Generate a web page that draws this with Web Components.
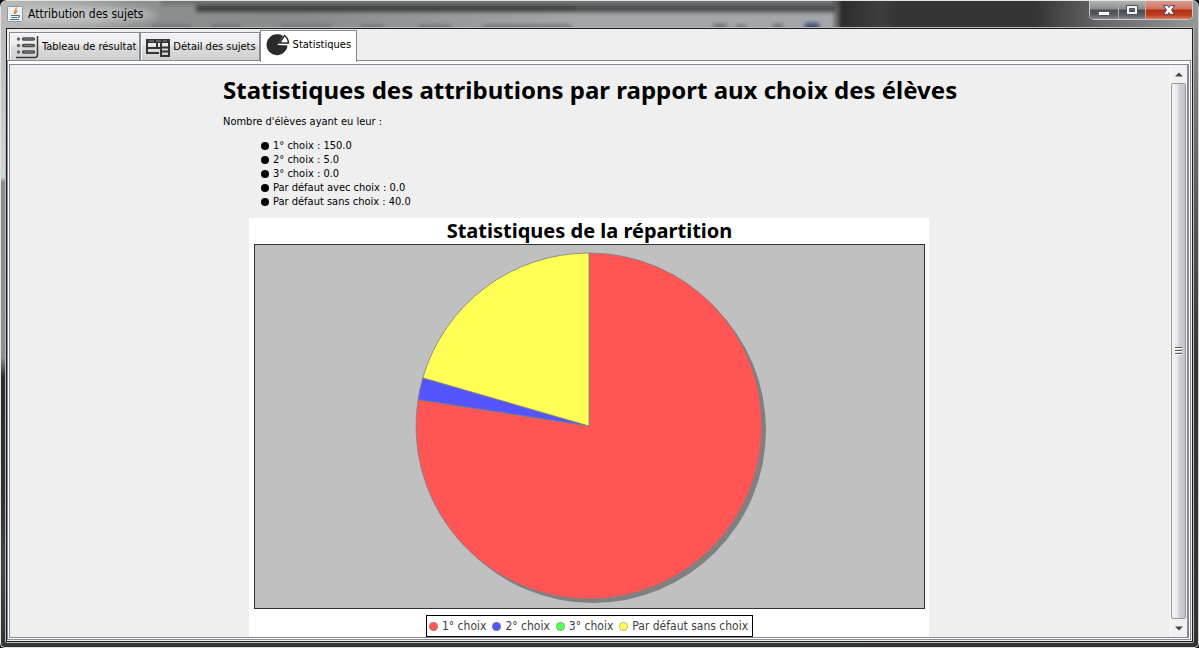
<!DOCTYPE html>
<html lang="fr">
<head>
<meta charset="utf-8">
<title>Attribution des sujets</title>
<style>
html,body{margin:0;height:100%;background:#111}
body{font:11px/14px "DejaVu Sans Condensed","DejaVu Sans",sans-serif;color:#000}
</style>
</head>
<body>
<app-window heading="Attribution des sujets">
  <tab-bar slot="tabs">
    <tab-item icon="list">Tableau de résultat</tab-item>
    <tab-item icon="table">Détail des sujets</tab-item>
    <tab-item icon="pie" selected>Statistiques</tab-item>
  </tab-bar>
  <scroll-pane>
    <stats-report></stats-report>
  </scroll-pane>
</app-window>

<script>
const define = (name, html, setup) => {
  const t = document.createElement('template');
  t.innerHTML = html;
  customElements.define(name, class extends HTMLElement {
    constructor() {
      super();
      this.attachShadow({mode: 'open'}).append(t.content.cloneNode(true));
    }
    connectedCallback() { if (setup) setup(this, this.shadowRoot); }
  });
};

define('window-controls', `
<style>
:host{display:flex;height:19px;width:104px;box-sizing:border-box;border:1px solid #c9c9c9;border-top:0;border-radius:0 0 5px 5px;overflow:hidden;background:#222}
button{margin:0;padding:0;border:0;height:18px;display:flex;align-items:center;justify-content:center;background:linear-gradient(#b4b4b4,#8b8b8b 45%,#4b4c50 50%,#5d6066 80%,#868a90)}
.min{width:28px}.max{width:27px;border-left:1px solid #aaa}
.close{flex:1;border-left:1px solid #c9a59c;background:linear-gradient(#dc9c8e,#c9705e 45%,#b02d12 50%,#c13f22 80%,#dd7d5c)}
svg{display:block}
</style>
<button class="min" aria-label="Réduire"><svg width="14" height="14"><rect x="1.500" y="8.500" width="11" height="4" rx="1" fill="#fff" stroke="#4c5060"/></svg></button>
<button class="max" aria-label="Agrandir"><svg width="14" height="14"><path fill="#f2f2f2" fill-rule="evenodd" stroke="#4c5060" d="M1.500 2.500h11v9h-11zM4.500 5.500v3h5v-3z"/></svg></button>
<button class="close" aria-label="Fermer"><svg width="14" height="14"><path fill="#fff" stroke="#4c4656" d="M1.500 2.500h4l1.500 2 1.500-2h4l-3 4.500 3 4.500h-4l-1.500-2-1.500 2h-4l3-4.500z"/></svg></button>
`);

define('app-window', `
<style>
:host{position:relative;display:flex;flex-direction:column;box-sizing:border-box;height:100vh;border:1px solid #dfe5e3;border-right-color:#d0d0d0;border-radius:7px 7px 5px 5px;overflow:hidden;padding:0 4px 4px;
background:
 linear-gradient(90deg,transparent 70%,#333 73%) 0 100%/100% 5px no-repeat,
 linear-gradient(#3a3c3c,#303232) 0 100%/100% 5px no-repeat,
 linear-gradient(#909090,#777 80px,#555 200px,#343434 340px,#333) 100% 26px/5px 100% no-repeat,
 linear-gradient(#b9b9b9,#d3d6d6 150px,#8a8c8c 155px,#8f9191 330px,#2c2e2e 350px,#333 480px,#454747 540px,#2c2e2e) 0 26px/5px 100% no-repeat,
 #777}
.glass{position:absolute;inset:0 0 auto 0;height:27px;overflow:hidden}
.glass svg{display:block;width:100%;height:27px}
header{position:relative;display:flex;align-items:flex-start;justify-content:space-between;height:26px;padding:0 1px 0 2px}
.name{display:flex;align-items:center;gap:5px;height:26px;margin:0;font-weight:400;font-size:12px;line-height:16px}
.client{position:relative;flex:1;min-height:0;display:flex;flex-direction:column;border:1px solid #b9bcbc;border-radius:2px}
.inner{flex:1;min-height:0;display:flex;flex-direction:column;border:1px solid #1d1b20;background:#efefef;padding-top:1px}
.pane{flex:1;min-height:0;display:flex;border:1px solid #868a97;background:#fff;padding:3px 1px 1px;margin:0 1px 1px 0}
</style>
<div class="glass"><svg preserveAspectRatio="none" viewBox="0 0 1197 27">
<defs><linearGradient id="g"><stop offset="0" stop-color="#b9bbbb"/><stop offset=".08" stop-color="#a5a6a6"/><stop offset=".15" stop-color="#8d8f8f"/><stop offset=".35" stop-color="#898b8c"/><stop offset=".69" stop-color="#a4a7a9"/></linearGradient>
<linearGradient id="r"><stop offset="0" stop-color="#333" stop-opacity="0"/><stop offset=".03" stop-color="#2d2d2d"/><stop offset=".14" stop-color="#3e3e3e"/><stop offset=".18" stop-color="#343434"/><stop offset=".55" stop-color="#343434"/><stop offset=".75" stop-color="#6a6a6a"/><stop offset="1" stop-color="#969696"/></linearGradient>
<filter id="b" x="-20%" y="-100%" width="140%" height="300%"><feGaussianBlur stdDeviation="5"/></filter><filter id="c" x="-20%" y="-100%" width="140%" height="300%"><feGaussianBlur stdDeviation="2"/></filter></defs>
<rect width="850" height="27" fill="url(#g)"/>
<g filter="url(#c)"><rect x="160" y="-4" width="680" height="8" fill="#707472"/><rect x="195" y="4" width="640" height="7" fill="#484848"/><rect x="195" y="4" width="380" height="6" fill="#3c3c3c"/>
<g fill="#6c7078"><rect x="150" y="24" width="40" height="5"/><rect x="210" y="24" width="30" height="5"/><rect x="280" y="24" width="50" height="5"/><rect x="360" y="24" width="22" height="5"/><rect x="418" y="24" width="32" height="5"/><rect x="482" y="24" width="88" height="5"/><rect x="712" y="23" width="14" height="6"/><rect x="735" y="24" width="10" height="5"/><rect x="772" y="23" width="10" height="6"/></g><rect x="804" y="22" width="14" height="8" fill="#3c4878"/></g>
<rect x="830" width="367" height="27" fill="url(#r)"/>
<ellipse cx="84" cy="14" rx="72" ry="8" fill="#fff" opacity=".4" filter="url(#b)"/>
</svg></div>
<header>
<h1 class="name"><svg width="16" height="16"><rect x=".5" y=".5" width="15" height="15" rx="1" fill="#eef2f5" stroke="#8b99a6"/><path d="M9 1.500C10 4 6 5 7.500 8M10.500 4.500C8 6 9 6.500 8.500 8" fill="none" stroke="#e8802e" stroke-width="1.300"/><path d="M4 9.500h6.500M4.500 11.500h5.500M10.500 9.500c3-.5 2 2 0 2M3 13.500h9" fill="none" stroke="#41719c" stroke-width="1.100"/></svg><span></span></h1>
<window-controls></window-controls>
</header>
<div class="client"><div class="inner"><slot name="tabs"></slot><div class="pane"><slot></slot></div></div></div>
`, (el, root) => { root.querySelector('.name span').textContent = el.getAttribute('heading'); });

define('tab-bar', `
<style>:host{display:flex;align-items:flex-end;height:30px;padding-left:2px;position:relative;z-index:1}</style><slot></slot>`,
  el => el.setAttribute('role', 'tablist'));

const ICONS = {
  list: `<svg width="24" height="24"><path d="M1 22.500h19q2.500 0 2.500-3V1" fill="none" stroke="#3a3a3a" stroke-width="1.500"/><path d="M8.500 4h10M8.500 10.500h10M8.500 17h10" stroke="#4c4c4c" stroke-width="3.400" stroke-linecap="round"/><path d="M8.500 4h10M8.500 10.500h10M8.500 17h10" stroke="#808080" stroke-width="1"/><g fill="#666"><circle cx="3.500" cy="4" r="1.700"/><circle cx="3.500" cy="10.500" r="1.700"/><circle cx="3.500" cy="17" r="1.700"/></g></svg>`,
  table: `<svg width="24" height="24"><path d="M0 4h24v4H0z" fill="#333"/><path d="M3 6h5M10 6h5M17 6h4" stroke="#8a8a8a"/><path d="M1 4v14h12M11 8v5M1 13h13M15 8v13h8V8M15 12.500h8M15 16.500h8" fill="none" stroke="#333" stroke-width="2"/></svg>`,
  pie: `<svg width="24" height="24"><path d="M11.500 12 17 3A10.500 10.500 0 1 0 21.500 12.500z" fill="#2b2b2b"/><path d="M13.500 10 18.500 2.500Q22 5 22.500 10z" fill="#fff" stroke="#2b2b2b" stroke-width="1.500"/></svg>`
};
define('tab-item', `
<style>
:host{display:block}
button{display:flex;align-items:center;gap:3px;box-sizing:border-box;height:28px;margin:0;padding:0 3px 0 5px;border:1px solid #868a97;border-bottom:0;background:linear-gradient(#f3f3f3,#ebebeb 45%,#dcdcdc 50%,#cfcfcf);box-shadow:inset 1px 1px #fafafa;font:inherit;color:#000;white-space:nowrap}
:host([selected]) button{height:32px;margin:0 0 -2px;padding:0 5px 4px;background:#fff;box-shadow:none}
svg{display:block}
</style>
<button role="tab"><span class="icon"></span><slot></slot></button>
`, (el, root) => {
  root.querySelector('.icon').innerHTML = ICONS[el.getAttribute('icon')];
  root.querySelector('button').setAttribute('aria-selected', el.hasAttribute('selected'));
});

define('scroll-pane', `
<style>
:host{flex:1;min-width:0;display:flex;border:1px solid #868a97;border-right-width:2px;background:#efefef}
.view{flex:1;min-width:0;overflow:hidden}
.bar{display:flex;flex-direction:column;width:17px;box-sizing:border-box;background:#f1f1f1;border-left:1px solid #fafafa}
.bar button{height:18px;margin:0;padding:0;border:0;background:none;display:flex;align-items:center;justify-content:center}
.thumb{flex:1;box-sizing:border-box;margin:0 1px 0 0;border:1px solid #979797;border-radius:2px;background:linear-gradient(90deg,#f5f5f5,#e6e6e9 45%,#cfcfd4 55%,#c3c3c9);display:flex;align-items:center;justify-content:center}
</style>
<div class="view"><slot></slot></div>
<div class="bar">
<button aria-label="Haut"><svg width="8" height="5"><path d="M0 4.500 4 .5l4 4z" fill="#444"/></svg></button>
<div class="thumb"><svg width="7" height="8"><path d="M0 .5h7M0 3.500h7M0 6.500h7" stroke="#555"/><path d="M0 1.500h7M0 4.500h7M0 7.500h7" stroke="#fff"/></svg></div>
<button aria-label="Bas"><svg width="8" height="5"><path d="M0 .5 4 4.500l4-4z" fill="#444"/></svg></button>
</div>`);

define('pie-chart', `
<style>
:host{display:block;box-sizing:border-box;width:680px;max-width:100%;background:#fff;padding:0 4px 0 5px}
figure{margin:0}
h2{margin:0;font:bold 20px/26px "Noto Sans",sans-serif;text-align:center}
.plot{box-sizing:border-box;border:1px solid #333;background:silver}
.plot svg{display:block;width:100%;height:363px}
figcaption{display:flex;justify-content:center;padding:6px 0 5px}
ul{display:flex;gap:6px;margin:0;padding:0 4px 0 2px;border:1px solid #000;list-style:none;font-size:12px;line-height:20px;color:#404040}
li{display:flex;align-items:center;gap:4px}
i{width:9px;height:9px;box-sizing:border-box;border:1px solid #8888;border-radius:50%}
</style>
<figure><h2>Statistiques de la répartition</h2>
<div class="plot"><svg viewBox="0 0 669 363" role="img" aria-label="Répartition des choix"><circle cx="338" cy="185" r="173" fill="#808080"/><g class="slices" stroke="#808080" stroke-opacity=".8"></g></svg></div>
<figcaption><ul></ul></figcaption></figure>
`, (el, root) => {
  const data = [['1° choix',151,'#f55'],['2° choix',4,'#55f'],['3° choix',0,'#5f5'],['Par défaut sans choix',40,'#ff5']];
  const total = data.reduce((s, d) => s + d[1], 0), cx = 334, cy = 181, r = 173;
  const at = v => { const a = v / total * 2 * Math.PI; return (cx + r * Math.sin(a)).toFixed(2) + ' ' + (cy - r * Math.cos(a)).toFixed(2); };
  let sum = 0, paths = '';
  for (const [label, n, color] of data) {
    if (n) paths += `<path fill="${color}" d="M${cx} ${cy}L${at(sum)}A${r} ${r} 0 ${n > total / 2 ? 1 : 0} 1 ${at(sum + n)}z"/>`;
    sum += n;
  }
  root.querySelector('.slices').innerHTML = paths;
  root.querySelector('ul').innerHTML = data.map(([l, , c]) => `<li><i style="background:${c}"></i>${l}</li>`).join('');
});

define('stats-report', `
<style>
:host{display:flex;flex-direction:column;align-items:center;padding:9px 2px 0 0}
section{width:732px;max-width:100%}
h1{margin:0 0 9px;font:bold 24px/32px "Noto Sans",sans-serif;white-space:nowrap}
p{margin:0 0 10px;line-height:14px}
ul{margin:0 0 9px;padding:0 0 0 38px;list-style:none;line-height:14px}
li{display:flex;align-items:center;gap:4px}
li::before{content:"";width:8px;height:8px;border-radius:50%;background:#000}
</style>
<section>
<h1>Statistiques des attributions par rapport aux choix des élèves</h1>
<p>Nombre d'élèves ayant eu leur :</p>
<ul><li>1° choix : 150.0</li><li>2° choix : 5.0</li><li>3° choix : 0.0</li><li>Par défaut avec choix : 0.0</li><li>Par défaut sans choix : 40.0</li></ul>
</section>
<pie-chart></pie-chart>`);
</script>
</body>
</html>
